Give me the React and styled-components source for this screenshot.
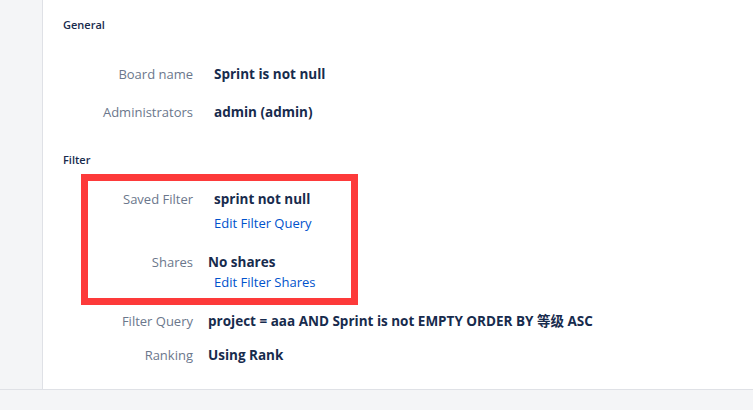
import React from 'react';
import styled, { createGlobalStyle } from 'styled-components';

const GlobalStyle = createGlobalStyle`
    html, body {
        margin: 0;
        padding: 0;
        background: #ffffff;
        font-family: "Open Sans", "Noto Sans CJK SC", sans-serif;
    }
`

const Page = styled.div`
    display: flex;
    flex-direction: column;
    width: 753px;
    height: 410px;
    overflow: hidden;
`

const Body = styled.div`
    display: flex;
    flex-direction: row;
    flex: 1;
`

const Sidebar = styled.div`
    width: 42px;
    background-color: #f4f5f7;
    border-right: 1px solid #dfe1e6;
`

const Content = styled.div`
    flex: 1;
    padding: 17px 0 24px 20px;
    display: flex;
    flex-direction: column;
`

const Footer = styled.div`
    height: 20px;
    background-color: #f4f5f7;
    border-top: 1px solid #dfe1e6;
`

const Heading = styled.h4`
    margin: ${p => p.top || 0}px 0 0 0;
    font-size: 11px;
    line-height: 16px;
    font-weight: 600;
    color: #172b4d;
`

const Row = styled.div`
    display: flex;
    flex-direction: row;
    align-items: flex-start;
    margin-top: ${p => p.top || 0}px;
    line-height: 20px;
    font-size: 13px;
`

const Label = styled.div`
    width: ${p => p.width || 130}px;
    text-align: right;
    color: #6b778c;
    flex-shrink: 0;
`

const Value = styled.div`
    margin-left: ${p => p.gap || 21}px;
    display: flex;
    flex-direction: column;
`

const Strong = styled.span`
    font-size: 13.5px;
    font-weight: 700;
    color: #172b4d;
    white-space: nowrap;
`

const Link = styled.a`
    color: #0052cc;
    text-decoration: none;
    margin-top: ${p => p.top || 0}px;
    margin-left: ${p => p.shift || 0}px;
    cursor: pointer;
`

const Highlight = styled.div`
    margin: 6px 0 0 18px;
    width: 263px;
    padding: 8px 0 6px 0;
    border: 7px solid #fd3a3a;
`

export default function App() {
    return (
        <Page>
            <GlobalStyle />
            <Body>
                <Sidebar />
                <Content>
                    <Heading>General</Heading>
                    <Row top={31}>
                        <Label>Board name</Label>
                        <Value><Strong>Sprint is not null</Strong></Value>
                    </Row>
                    <Row top={18}>
                        <Label>Administrators</Label>
                        <Value><Strong>admin (admin)</Strong></Value>
                    </Row>
                    <Heading top={30}>Filter</Heading>
                    <Highlight>
                        <Row>
                            <Label width={105}>Saved Filter</Label>
                            <Value>
                                <Strong>sprint not null</Strong>
                                <Link top={4}>Edit Filter Query</Link>
                            </Value>
                        </Row>
                        <Row top={19}>
                            <Label width={105}>Shares</Label>
                            <Value gap={15}>
                                <Strong>No shares</Strong>
                                <Link shift={6}>Edit Filter Shares</Link>
                            </Value>
                        </Row>
                    </Highlight>
                    <Row top={6}>
                        <Label>Filter Query</Label>
                        <Value gap={15}><Strong>project = aaa AND Sprint is not EMPTY ORDER BY 等级 ASC</Strong></Value>
                    </Row>
                    <Row top={14}>
                        <Label>Ranking</Label>
                        <Value gap={15}><Strong>Using Rank</Strong></Value>
                    </Row>
                </Content>
            </Body>
            <Footer />
        </Page>
    );
}
